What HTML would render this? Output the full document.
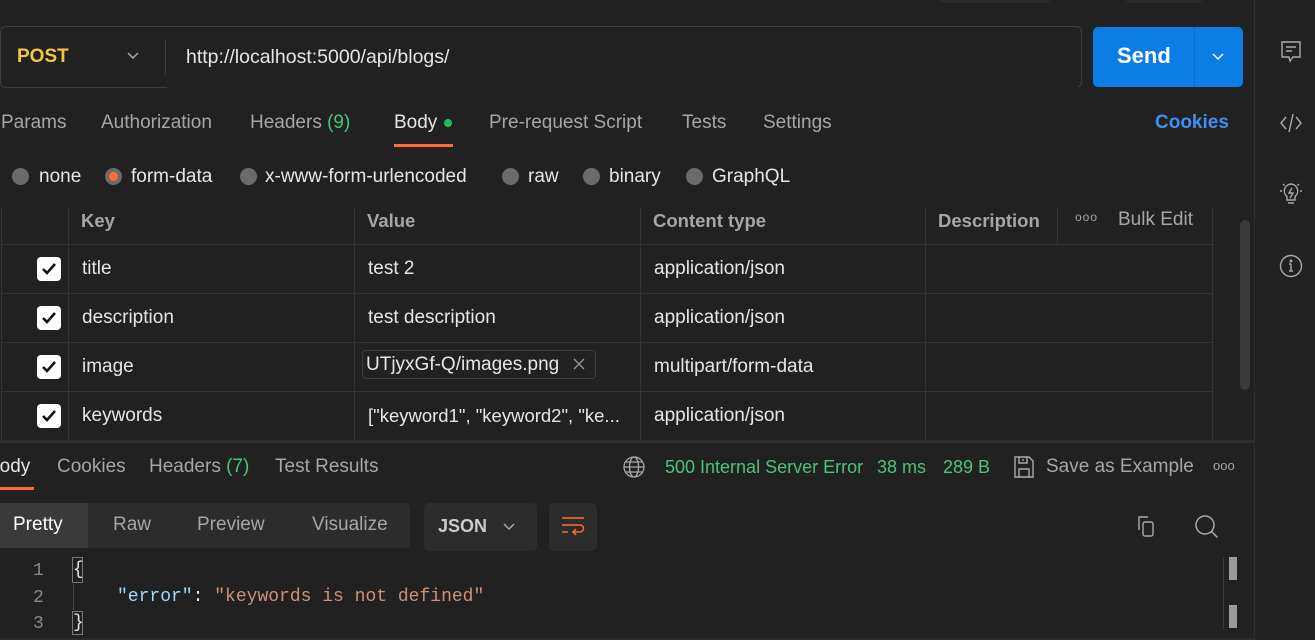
<!DOCTYPE html>
<html><head><style>
*{margin:0;padding:0;box-sizing:border-box}
body{width:1315px;height:640px;background:#212121;font-family:"Liberation Sans",sans-serif;color:#e6e6e6;position:relative;overflow:hidden;font-size:19px}
.a{position:absolute;white-space:nowrap}
.g{color:#a6a6a6}
.grn{color:#49c47a}
.hd{color:#a6a6a6;font-weight:bold;font-size:18.5px}
.cb{position:absolute;left:37px;width:24px;height:24px;background:#fff;border-radius:4px}
.rd{position:absolute;width:17px;height:17px;border-radius:50%;background:#6b6b6b}
.mono{font-family:"Liberation Mono",monospace;font-size:18px}
</style></head><body>
<div class="a" style="left:940px;top:-6px;width:110px;height:9px;background:#2c2c2c;border-radius:4px"></div>
<div class="a" style="left:1126px;top:-6px;width:76px;height:9px;background:#2c2c2c;border-radius:4px"></div>

<div class="a" style="left:0;top:26px;width:1082px;height:62px;border:1px solid #3c3c3c;border-radius:6px"></div>
<div class="a" style="left:167px;top:87px;width:915px;height:2px;background:#212121"></div>
<div class="a" style="left:165px;top:39px;width:1px;height:36px;background:#3c3c3c"></div>
<div class="a" style="left:17px;top:46px;color:#f5c542;font-weight:bold;font-size:19px">POST</div>
<svg class="a" style="left:126px;top:51px" width="14" height="10"><path d="M2 2l5 5 5-5" stroke="#aaa" stroke-width="1.5" fill="none"/></svg>
<div class="a" style="left:186px;top:46px;font-size:19.5px">http://localhost:5000/api/blogs/</div>
<div class="a" style="left:1093px;top:27px;width:150px;height:60px;background:#0c7ce6;border-radius:5px"></div>
<div class="a" style="left:1194px;top:27px;width:1px;height:60px;background:#0a6ccc"></div>
<div class="a" style="left:1117px;top:43px;color:#fff;font-weight:bold;font-size:22px">Send</div>
<svg class="a" style="left:1211px;top:52px" width="14" height="10"><path d="M2 2l5 5 5-5" stroke="#fff" stroke-width="1.5" fill="none"/></svg>

<div class="a g" style="left:1px;top:112px">Params</div>
<div class="a g" style="left:101px;top:112px">Authorization</div>
<div class="a g" style="left:250px;top:112px">Headers <span class="grn">(9)</span></div>
<div class="a" style="left:394px;top:112px">Body</div>
<div class="a" style="left:444px;top:119px;width:8px;height:8px;border-radius:50%;background:#1fbf5f"></div>
<div class="a" style="left:394px;top:144px;width:59px;height:3px;background:#ff6c37"></div>
<div class="a g" style="left:489px;top:112px">Pre-request Script</div>
<div class="a g" style="left:682px;top:112px">Tests</div>
<div class="a g" style="left:763px;top:112px">Settings</div>
<div class="a" style="left:1155px;top:112px;color:#3d8ff5;font-weight:bold">Cookies</div>

<div class="rd" style="left:12px;top:168px"></div><div class="a" style="left:39px;top:166px">none</div>
<div class="rd" style="left:105px;top:168px"><div style="position:absolute;left:4px;top:4px;width:9px;height:9px;border-radius:50%;background:#ff6c37"></div></div><div class="a" style="left:131px;top:166px">form-data</div>
<div class="rd" style="left:240px;top:168px"></div><div class="a" style="left:265px;top:166px">x-www-form-urlencoded</div>
<div class="rd" style="left:502px;top:168px"></div><div class="a" style="left:528px;top:166px">raw</div>
<div class="rd" style="left:583px;top:168px"></div><div class="a" style="left:609px;top:166px">binary</div>
<div class="rd" style="left:686px;top:168px"></div><div class="a" style="left:712px;top:166px">GraphQL</div>

<div class="a" style="left:1px;top:208px;width:1212px;height:233px;border-left:1px solid #333;border-right:1px solid #333"></div>
<div class="a" style="left:68px;top:208px;width:1px;height:233px;background:#333"></div>
<div class="a" style="left:354px;top:208px;width:1px;height:233px;background:#333"></div>
<div class="a" style="left:640px;top:208px;width:1px;height:233px;background:#333"></div>
<div class="a" style="left:925px;top:208px;width:1px;height:233px;background:#333"></div>
<div class="a" style="left:1057px;top:208px;width:1px;height:36px;background:#333"></div>
<div class="a" style="left:1px;top:244px;width:1212px;height:1px;background:#333"></div>
<div class="a" style="left:1px;top:293px;width:1212px;height:1px;background:#333"></div>
<div class="a" style="left:1px;top:342px;width:1212px;height:1px;background:#333"></div>
<div class="a" style="left:1px;top:391px;width:1212px;height:1px;background:#333"></div>
<div class="a hd" style="left:81px;top:210px">Key</div>
<div class="a hd" style="left:367px;top:210px">Value</div>
<div class="a hd" style="left:653px;top:210px">Content type</div>
<div class="a hd" style="left:938px;top:210px">Description</div>
<div class="a g" style="left:1075px;top:210px;font-size:12px;letter-spacing:1px">ooo</div>
<div class="a g" style="left:1118px;top:209px">Bulk Edit</div>

<div class="cb" style="top:257px"><svg width="24" height="24"><path d="M6 12l4 4 8-9" stroke="#111" stroke-width="2.6" fill="none"/></svg></div>
<div class="a" style="left:82px;top:258px">title</div>
<div class="a" style="left:368px;top:258px">test 2</div>
<div class="a" style="left:654px;top:258px">application/json</div>

<div class="cb" style="top:306px"><svg width="24" height="24"><path d="M6 12l4 4 8-9" stroke="#111" stroke-width="2.6" fill="none"/></svg></div>
<div class="a" style="left:82px;top:307px">description</div>
<div class="a" style="left:368px;top:307px">test description</div>
<div class="a" style="left:654px;top:307px">application/json</div>

<div class="cb" style="top:355px"><svg width="24" height="24"><path d="M6 12l4 4 8-9" stroke="#111" stroke-width="2.6" fill="none"/></svg></div>
<div class="a" style="left:82px;top:356px">image</div>
<div class="a" style="left:362px;top:350px;width:234px;height:29px;border:1px solid #3c3c3c;border-radius:4px"></div>
<div class="a" style="left:366px;top:354px">UTjyxGf-Q/images.png</div>
<svg class="a" style="left:573px;top:358px" width="12" height="12"><path d="M1 1l10 10M11 1L1 11" stroke="#999" stroke-width="1.3"/></svg>
<div class="a" style="left:654px;top:356px">multipart/form-data</div>

<div class="cb" style="top:404px"><svg width="24" height="24"><path d="M6 12l4 4 8-9" stroke="#111" stroke-width="2.6" fill="none"/></svg></div>
<div class="a" style="left:82px;top:405px">keywords</div>
<div class="a" style="left:368px;top:405px;font-size:18.5px">["keyword1", "keyword2", "ke...</div>
<div class="a" style="left:654px;top:405px">application/json</div>

<div class="a" style="left:1240px;top:220px;width:10px;height:170px;background:#3a3a3a;border-radius:5px"></div>
<div class="a" style="left:0;top:440px;width:1254px;height:3px;background:#2e2e2e"></div>

<div class="a" style="left:1254px;top:0;width:1px;height:640px;background:#2e2e2e"></div>
<svg class="a" style="left:1280px;top:40px" width="22" height="24" fill="none" stroke="#aaa" stroke-width="1.4"><path d="M2 2h18v15H13l-3 4-1-4H2z"/><path d="M6 7h10M6 11h6"/></svg>
<svg class="a" style="left:1279px;top:112px" width="24" height="22" fill="none" stroke="#aaa" stroke-width="1.4"><path d="M7 5L2 11l5 6M17 5l5 6-5 6M14 2l-4 18"/></svg>
<svg class="a" style="left:1279px;top:181px" width="24" height="26" fill="none" stroke="#aaa" stroke-width="1.4"><path d="M12 3a7 7 0 0 0-4 12.5V19h8v-3.5A7 7 0 0 0 12 3zM9 22h6M13 7l-3 5h4l-3 5"/><path d="M1 10h2M21 10h2M4 3l1.5 1.5M20 3l-1.5 1.5"/></svg>
<svg class="a" style="left:1279px;top:254px" width="24" height="24" fill="none" stroke="#aaa" stroke-width="1.4"><circle cx="12" cy="12" r="10.5"/><path d="M12 10v7M10 17h4M10 10h2"/><circle cx="12" cy="7" r="0.8" fill="#aaa"/></svg>

<div class="a" style="left:-13px;top:456px">Body</div>
<div class="a" style="left:0;top:487px;width:34px;height:3px;background:#ff6c37"></div>
<div class="a g" style="left:57px;top:456px">Cookies</div>
<div class="a g" style="left:149px;top:456px">Headers <span class="grn">(7)</span></div>
<div class="a g" style="left:275px;top:456px">Test Results</div>

<svg class="a" style="left:623px;top:456px" width="22" height="22" fill="none" stroke="#aaa" stroke-width="1.3"><circle cx="11" cy="11" r="10"/><ellipse cx="11" cy="11" rx="4.5" ry="10"/><path d="M1 11h20M3 6h16M3 16h16"/></svg>
<div class="a grn" style="left:665px;top:457px;font-size:18px">500 Internal Server Error</div>
<div class="a grn" style="left:877px;top:457px;font-size:18px">38 ms</div>
<div class="a grn" style="left:943px;top:457px;font-size:18px">289 B</div>
<svg class="a" style="left:1013px;top:455px" width="22" height="24" fill="none" stroke="#aaa" stroke-width="1.4"><path d="M2 2h14l4 4v16H2z"/><path d="M6 2v6h8V2M10 4v2M6 22v-8h10v8"/></svg>
<div class="a g" style="left:1046px;top:456px">Save as Example</div>
<div class="a g" style="left:1213px;top:458px;font-size:13px">ooo</div>

<div class="a" style="left:0;top:503px;width:410px;height:45px;background:#2c2c2c;border-radius:0 5px 5px 0"></div>
<div class="a" style="left:0;top:503px;width:88px;height:45px;background:#3a3a3a"></div>
<div class="a" style="left:13px;top:514px;color:#fff">Pretty</div>
<div class="a g" style="left:113px;top:514px">Raw</div>
<div class="a g" style="left:197px;top:514px">Preview</div>
<div class="a g" style="left:312px;top:514px">Visualize</div>
<div class="a" style="left:424px;top:503px;width:113px;height:48px;background:#2c2c2c;border-radius:5px"></div>
<div class="a" style="left:438px;top:516px;color:#ccc;font-weight:bold;font-size:18px">JSON</div>
<svg class="a" style="left:502px;top:522px" width="14" height="10"><path d="M2 2l5 5 5-5" stroke="#aaa" stroke-width="1.5" fill="none"/></svg>
<div class="a" style="left:549px;top:503px;width:48px;height:48px;background:#2c2c2c;border-radius:5px"></div>
<svg class="a" style="left:561px;top:516px" width="24" height="22" fill="none" stroke="#ff6c37" stroke-width="1.5"><path d="M1 2h22M1 9h18a3.5 3.5 0 0 1 0 7h-7M15 13l-3 3 3 3M1 16h6"/></svg>
<svg class="a" style="left:1135px;top:514px" width="24" height="26" fill="none" stroke="#aaa" stroke-width="1.4"><path d="M4 16V3h9"/><rect x="8" y="8" width="10" height="14" rx="2"/></svg>
<svg class="a" style="left:1194px;top:514px" width="26" height="26" fill="none" stroke="#aaa" stroke-width="1.5"><circle cx="11" cy="11" r="9"/><path d="M17.5 17.5l6 6"/></svg>

<div class="a mono" style="left:33px;top:561px;color:#8a8a8a">1</div>
<div class="a mono" style="left:33px;top:588px;color:#8a8a8a">2</div>
<div class="a mono" style="left:33px;top:614px;color:#8a8a8a">3</div>
<div class="a" style="left:72px;top:557px;width:11px;height:26px;border:1px solid #777"></div>
<div class="a mono" style="left:73px;top:560px">{</div>
<div class="a" style="left:73px;top:584px;width:1px;height:26px;background:#444"></div>
<div class="a mono" style="left:117px;top:587px"><span style="color:#9cdcfe">"error"</span>: <span style="color:#ce9178">"keywords is not defined"</span></div>
<div class="a" style="left:72px;top:611px;width:11px;height:24px;border:1px solid #777"></div>
<div class="a mono" style="left:73px;top:613px">}</div>
<div class="a" style="left:1223px;top:557px;width:1px;height:72px;background:#3a3a3a"></div>
<div class="a" style="left:1229px;top:557px;width:8px;height:23px;background:#9a9a9a"></div>
<div class="a" style="left:1229px;top:605px;width:8px;height:23px;background:#9a9a9a"></div>
<div class="a" style="left:0;top:638px;width:1254px;height:2px;background:#2a2a2a"></div>
</body></html>
